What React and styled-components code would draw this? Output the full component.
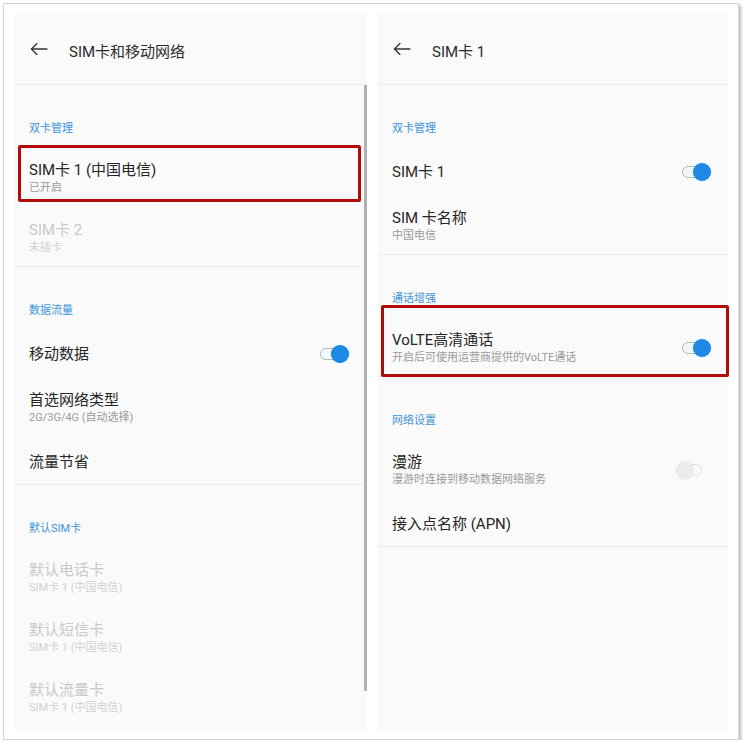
import styled, { createGlobalStyle } from 'styled-components'

const Global = createGlobalStyle`
    html, body {
        margin: 0;
        padding: 0;
        background: #ffffff;
    }
    body {
        font-family: Roboto, "Noto Sans CJK SC", "Noto Sans", sans-serif;
    }
`

const Frame = styled.div`
    box-sizing: border-box;
    margin: 3px 0 0 3px;
    width: 736px;
    height: 737px;
    padding: 10px 10px 9px 10px;
    display: flex;
    gap: 12px;
    background: #ffffff;
    border: 1px solid #d6d6d6;
    box-shadow: 2px 2px 3px rgba(0, 0, 0, 0.28);
`

const Screen = styled.div`
    position: relative;
    box-sizing: border-box;
    width: ${p => p.w}px;
    height: 716px;
    background: #fafafa;
    box-shadow: 0 0 1px rgba(0, 0, 0, 0.08);
    display: flex;
    flex-direction: column;
`

const Header = styled.div`
    height: 70px;
    display: flex;
    align-items: center;
    padding-left: ${p => p.pad}px;
    gap: 20px;
    border-bottom: 1px solid #ececec;
    flex-shrink: 0;
`

const Title = styled.div`
    font-size: 15px;
    color: #2a2a2a;
    padding-top: 2px;
`

const Section = styled.div`
    display: flex;
    flex-direction: column;
    border-bottom: ${p => (p.last ? 'none' : '1px solid #ececec')};
`

const SectionLabel = styled.div`
    box-sizing: border-box;
    height: 61px;
    padding: 36px 0 0 ${p => p.pad}px;
    font-size: 11px;
    line-height: 16px;
    color: #3f95d8;
`

const Row = styled.div`
    position: relative;
    box-sizing: border-box;
    height: ${p => (p.sub ? 60 : 48)}px;
    padding: ${p => (p.sub ? '14px' : '4px')} ${p => p.right}px 0 ${p => p.pad}px;
    display: flex;
    align-items: ${p => (p.sub ? 'flex-start' : 'center')};
    justify-content: space-between;
`

const RowText = styled.div`
    display: flex;
    flex-direction: column;
`

const RowTitle = styled.div`
    font-size: 15px;
    line-height: 20px;
    color: ${p => (p.dim ? '#c9c9c9' : '#262626')};
`

const RowSub = styled.div`
    font-size: 11px;
    line-height: 15px;
    color: ${p => (p.dim ? '#d2d2d2' : '#9a9a9a')};
`

const Highlight = styled.div`
    position: absolute;
    top: ${p => p.t}px;
    bottom: ${p => p.b}px;
    left: ${p => p.l}px;
    right: ${p => p.r}px;
    border: 3px solid #b30a0a;
    border-radius: 2px;
    pointer-events: none;
`

const ToggleWrap = styled.div`
    position: relative;
    width: 30px;
    height: 20px;
    align-self: center;
    margin-top: ${p => (p.sub ? '-10px' : '0')};
    flex-shrink: 0;
`

const Track = styled.div`
    position: absolute;
    left: 0;
    top: 4px;
    width: 26px;
    height: 12px;
    box-sizing: border-box;
    border-radius: 6px;
    border: 1.5px solid ${p => (p.on ? '#aeb7c0' : '#e2e2e2')};
    background: ${p => (p.on ? '#f2f7fc' : '#fafafa')};
`

const Knob = styled.div`
    position: absolute;
    top: 1px;
    left: ${p => (p.on ? '11px' : '0')};
    width: 18px;
    height: 18px;
    border-radius: 50%;
    background: ${p => (p.on ? '#1e88e5' : '#ebebeb')};
    box-shadow: ${p => (p.on ? '0 0 1px rgba(30,136,229,0.6)' : '0 1px 1px rgba(0,0,0,0.06)')};
`

const Scrollbar = styled.div`
    position: absolute;
    right: -1px;
    top: 71px;
    width: 3px;
    height: 606px;
    background: #b2b2b2;
`

function BackArrow() {
    return (
        <svg width="20" height="20" viewBox="0 0 24 24" fill="none" stroke="#333" strokeWidth="1.6" strokeLinecap="round" strokeLinejoin="round">
            <path d="M21.5 12H3" />
            <path d="M9.5 5.5L3 12L9.5 18.5" />
        </svg>
    )
}

function Toggle({ on, sub }) {
    return (
        <ToggleWrap sub={sub}>
            <Track on={on} />
            <Knob on={on} />
        </ToggleWrap>
    )
}

function Item({ title, sub, dim, toggle, pad, right, children }) {
    return (
        <Row sub={!!sub} pad={pad} right={right}>
            <RowText>
                <RowTitle dim={dim}>{title}</RowTitle>
                {sub && <RowSub dim={dim}>{sub}</RowSub>}
            </RowText>
            {toggle !== undefined && <Toggle on={toggle} sub={!!sub} />}
            {children}
        </Row>
    )
}

function LeftScreen() {
    const pad = 15
    const right = 16
    return (
        <Screen w={352}>
            <Header pad={15}>
                <BackArrow />
                <Title>SIM卡和移动网络</Title>
            </Header>
            <Section>
                <SectionLabel pad={pad}>双卡管理</SectionLabel>
                <Item pad={pad} right={right} title="SIM卡 1  (中国电信)" sub="已开启">
                    <Highlight t={-1} b={4} l={4} r={5} />
                </Item>
                <Item pad={pad} right={right} title="SIM卡 2" sub="未插卡" dim />
            </Section>
            <Section>
                <SectionLabel pad={pad}>数据流量</SectionLabel>
                <Item pad={pad} right={right} title="移动数据" toggle={true} />
                <Item pad={pad} right={right} title="首选网络类型" sub="2G/3G/4G (自动选择)" />
                <Item pad={pad} right={right} title="流量节省" />
            </Section>
            <Section last>
                <SectionLabel pad={pad}>默认SIM卡</SectionLabel>
                <Item pad={pad} right={right} title="默认电话卡" sub="SIM卡 1 (中国电信)" dim />
                <Item pad={pad} right={right} title="默认短信卡" sub="SIM卡 1 (中国电信)" dim />
                <Item pad={pad} right={right} title="默认流量卡" sub="SIM卡 1 (中国电信)" dim />
            </Section>
            <Scrollbar />
        </Screen>
    )
}

function RightScreen() {
    const pad = 14
    const right = 16
    return (
        <Screen w={350}>
            <Header pad={14}>
                <BackArrow />
                <Title>SIM卡 1</Title>
            </Header>
            <Section>
                <SectionLabel pad={pad}>双卡管理</SectionLabel>
                <Item pad={pad} right={right} title="SIM卡 1" toggle={true} />
                <Item pad={pad} right={right} title="SIM 卡名称" sub="中国电信" />
            </Section>
            <Section>
                <SectionLabel pad={pad}>通话增强</SectionLabel>
                <Item pad={pad} right={right} title="VoLTE高清通话" sub="开启后可使用运营商提供的VoLTE通话" toggle={true}>
                    <Highlight t={-11} b={-1} l={3} r={-1} />
                </Item>
            </Section>
            <Section>
                <SectionLabel pad={pad}>网络设置</SectionLabel>
                <Item pad={pad} right={22} title="漫游" sub="漫游时连接到移动数据网络服务" toggle={false} />
                <Item pad={pad} right={right} title="接入点名称 (APN)" />
            </Section>
        </Screen>
    )
}

export default function App() {
    return (
        <>
            <Global />
            <Frame>
                <LeftScreen />
                <RightScreen />
            </Frame>
        </>
    )
}
